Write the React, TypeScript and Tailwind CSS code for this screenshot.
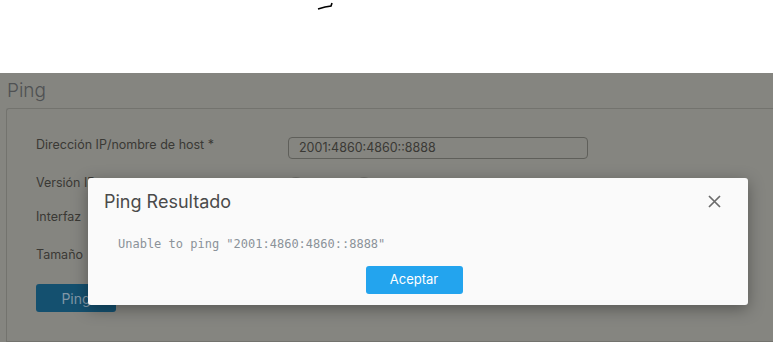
import React from "react";

export default function App() {
  const font = { fontFamily: "Inter, Roboto, 'Liberation Sans', sans-serif" };
  return (
    <div className="relative w-[773px] h-[342px] overflow-hidden bg-white" style={font}>
      <div className="h-[73px] bg-white relative">
        <svg className="absolute left-[316px] top-[2px]" width="18" height="8" viewBox="0 0 18 8">
          <path d="M2 7 L9 5 L15 4 L16 1" stroke="#000" strokeWidth="1.6" fill="none" />
        </svg>
      </div>
      <div className="h-[269px] bg-[#858580] pl-[6px] flex flex-col">
        <div className="h-[35px] pt-[6px] pl-[1px] text-[19px] font-light text-[#4f5153] leading-[24px]">Ping</div>
        <div className="flex-1 border border-[#73736e] border-r-0 rounded-tl-[3px] pl-[29px] pt-[25px]">
          <div className="flex items-center h-[22px] text-[12.5px] text-[#3a3935]">
            <div className="w-[252px]">Dirección IP/nombre de host *</div>
            <div className="w-[300px] h-[22px] mt-[6px] border border-[#5f5f5a] rounded-[4px] pl-[10px] flex items-center text-[12.5px] text-[#3a3935]">
              2001:4860:4860::8888
            </div>
          </div>
          <div className="flex items-center h-[22px] mt-[16px] text-[12.5px] text-[#3a3935]">
            <div className="w-[252px]">Versión IP</div>
            <div className="w-[16px] h-[16px] rounded-full bg-[#6f6f6a] mt-[4px]" />
            <div className="w-[16px] h-[16px] rounded-full bg-[#6f6f6a] ml-[52px] mt-[4px]" />
          </div>
          <div className="flex items-center h-[22px] mt-[12px] text-[12.5px] text-[#3a3935]">
            <div>Interfaz</div>
          </div>
          <div className="flex items-center h-[22px] mt-[16px] text-[12.5px] text-[#3a3935]">
            <div>Tamaño</div>
          </div>
          <div className="mt-[18px] w-[80px] h-[28px] rounded-[3px] bg-[#14506f] text-[#8197a6] text-[14px] flex items-center justify-center">
            Ping
          </div>
        </div>
      </div>
      <div className="absolute left-[88px] top-[178px] w-[660px] h-[127px] bg-[#fafafa] rounded-[3px] shadow-[0_4px_16px_rgba(0,0,0,0.35)] flex flex-col">
        <div className="flex items-center justify-between h-[46px] pl-[16px] pr-[27px]">
          <div className="text-[18px] text-[#4a4a4a] pt-[1px]">Ping Resultado</div>
          <svg width="13" height="13" viewBox="0 0 13 13">
            <path d="M1 1 L12 12 M12 1 L1 12" stroke="#6b6b6b" strokeWidth="1.7" />
          </svg>
        </div>
        <div className="pl-[30px] pt-[13px] text-[12px] leading-[14px] text-[#8b9299]" style={{ fontFamily: "'DejaVu Sans Mono', 'Liberation Mono', monospace" }}>
          Unable to ping "2001:4860:4860::8888"
        </div>
        <div className="flex justify-center mt-[15px] pr-[8px]">
          <div className="w-[97px] h-[28px] rounded-[3px] bg-[#23a4ee] text-white text-[13px] flex items-center justify-center">
            Aceptar
          </div>
        </div>
      </div>
    </div>
  );
}
